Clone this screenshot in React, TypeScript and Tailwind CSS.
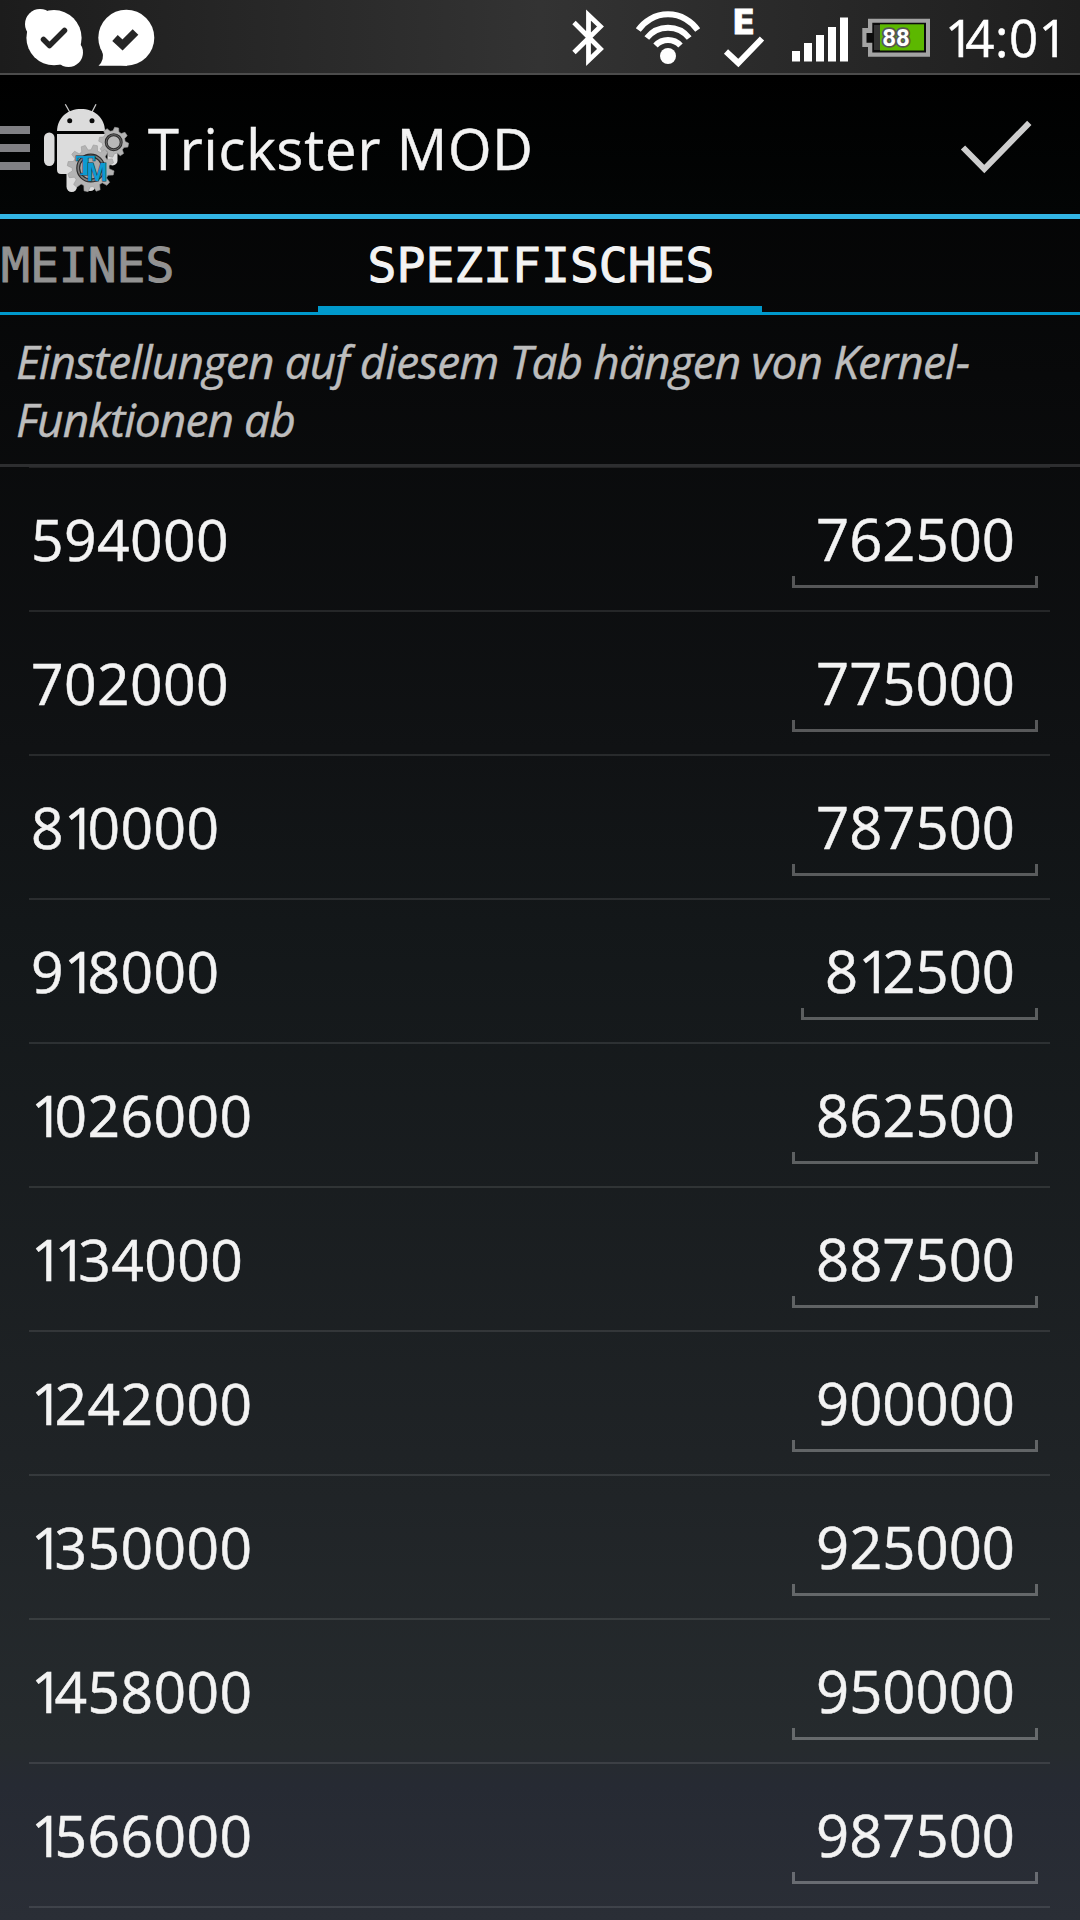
interface VoltageEntry {
    frequency: string;
    voltage: string;
}

const entries: VoltageEntry[] = [
    { frequency: '594000', voltage: '762500' },
    { frequency: '702000', voltage: '775000' },
    { frequency: '810000', voltage: '787500' },
    { frequency: '918000', voltage: '812500' },
    { frequency: '1026000', voltage: '862500' },
    { frequency: '1134000', voltage: '887500' },
    { frequency: '1242000', voltage: '900000' },
    { frequency: '1350000', voltage: '925000' },
    { frequency: '1458000', voltage: '950000' },
    { frequency: '1566000', voltage: '987500' },
];

// Outline of a cog wheel around (cx, cy)
function gearPath(cx: number, cy: number, outer: number, inner: number, teeth: number) {
    const points: string[] = [];
    const step = (Math.PI * 2) / teeth;
    const at = (radius: number, angle: number) =>
        `${(cx + radius * Math.cos(angle)).toFixed(2)} ${(cy + radius * Math.sin(angle)).toFixed(2)}`;

    for (let i = 0; i < teeth; i++) {
        const a = i * step + 0.2;
        points.push(at(inner, a - step * 0.34), at(outer, a - step * 0.17));
        points.push(at(outer, a + step * 0.17), at(inner, a + step * 0.34));
    }
    return `M${points.join('L')}Z`;
}

// The digit 1 is set tighter than the others
function Digits({ value }: { value: string }) {
    return (
        <>
            {value.split(/(1)/).map((part, i) =>
                part === '1' ? <span key={i} className="tracking-[-9px]">1</span> : part
            )}
        </>
    );
}

function StatusBar() {
    return (
        <div className="flex h-[77px] items-start border-b-2 border-black bg-linear-to-r/srgb from-[#1c1c1c] via-[#333333] to-[#1e1e1e]">
            <div className="flex h-[75px] w-full items-start border-b-2 border-[#4c4c4c] pl-6">
                <svg className="h-[71px] w-[60px]" viewBox="24 0 60 71" fill="#fff">
                    <circle cx="54" cy="37.7" r="27.6" />
                    <circle cx="40" cy="24" r="15" />
                    <circle cx="68.5" cy="52.5" r="14.5" />
                    <path d="M43.5 39.5L49.5 45.5L64.5 30.5" fill="none" stroke="#242424" strokeWidth="5.5" strokeLinecap="round" strokeLinejoin="round" />
                </svg>
                <svg className="ml-3 h-[71px] w-[60px]" viewBox="96 0 60 71" fill="#fff">
                    <circle cx="126.3" cy="37.7" r="28" />
                    <path d="M102 50Q105 60 98.5 65.7H127V50Z" />
                    <path d="M115 38L122.5 45L135.5 32" fill="none" stroke="#262626" strokeWidth="8" />
                </svg>
                <svg className="ml-[412px] h-[71px] w-[40px]" viewBox="568 0 40 71" fill="none" stroke="#fff" strokeWidth="4.8">
                    <path d="M574 22.5L600.5 49L588.5 60.5V15L600.5 26.5L574 52.5" />
                </svg>
                <svg className="ml-6 h-[71px] w-[72px]" viewBox="632 0 72 71" fill="none" stroke="#fff" strokeWidth="6">
                    <path d="M638.3 30A36 36 0 0 1 697.7 30" />
                    <path d="M646.8 38A27 27 0 0 1 689.2 38" />
                    <path d="M655.5 45.5A17 17 0 0 1 680.5 45.5" />
                    <circle cx="668" cy="56" r="8" fill="#fff" stroke="none" />
                </svg>
                <svg className="ml-4 h-[71px] w-[48px]" viewBox="720 0 48 71">
                    <text x="743.5" y="33.5" textAnchor="middle" fill="#fff" stroke="#fff" strokeWidth="0.8" className="font-['DejaVu_Sans',sans-serif] text-[34px] font-bold">E</text>
                    <path d="M726 51.5L738.3 63L762 38.5" fill="none" stroke="#fff" strokeWidth="6" />
                </svg>
                <svg className="ml-5 h-[71px] w-[64px]" viewBox="788 0 64 71" fill="#fff">
                    <rect x="792" y="51" width="8" height="10.5" />
                    <rect x="804" y="43" width="8" height="18.5" />
                    <rect x="816" y="35" width="8" height="26.5" />
                    <rect x="828" y="27" width="8" height="34.5" />
                    <rect x="840" y="17.5" width="8" height="44" />
                </svg>
                <svg className="ml-2 h-[71px] w-[72px]" viewBox="860 0 72 71">
                    <path d="M868 18.7H930V56.7H868V47H862.3V28H868Z" fill="#a3a3a3" />
                    <path d="M872.3 22.7H926V52.5H872.3V42.7H866.5V33H872.3Z" fill="#0c0c0c" />
                    <rect x="874" y="25" width="6" height="25" fill="#333" />
                    <rect x="880" y="24.3" width="44" height="26.2" fill="#5cb800" />
                    <text x="896" y="45.5" textAnchor="middle" fill="#fff" stroke="#555" strokeWidth="3.5" paintOrder="stroke" strokeLinejoin="round" className="font-[Roboto,sans-serif] text-[24px] font-bold">88</text>
                </svg>
                <div className="ml-[13px] h-[71px] text-[51px] leading-[74px] font-medium tracking-[0.6px] text-white">
                    <Digits value="14:01" />
                </div>
            </div>
        </div>
    );
}

function AppLogo() {
    return (
        <svg className="ml-3 h-[96px] w-[90px]" viewBox="42 99 90 96">
            <g fill="#dcdcdc">
                <path d="M65.3 103.3L69.7 111M96 103.3L92 111" stroke="#c8c8c8" strokeWidth="1.3" />
                <path d="M57 130C57.5 116 68 108 81 108S104.500 116 105 130Z" />
                <path d="M57 133H105V173H61Q57 173 57 168.5Z" />
                <rect x="44" y="131.5" width="10.5" height="33.5" rx="5.2" />
                <rect x="107.5" y="131.5" width="10" height="33" rx="5" />
                <rect x="66.5" y="165" width="10.5" height="26" rx="5.2" />
                <rect x="85" y="165" width="10.5" height="25" rx="5.2" />
            </g>
            <circle cx="69.7" cy="119.7" r="2.5" fill="#0a0a0a" />
            <circle cx="92" cy="119.7" r="2.5" fill="#0a0a0a" />
            <g fill="#b4b4b4" stroke="#9a9a9a" strokeWidth="0.6" strokeLinejoin="round">
                <path d={gearPath(113.7, 141.2, 15, 11.5, 8)} />
                <path d={gearPath(90.7, 167.3, 23.5, 18.5, 12)} />
            </g>
            <circle cx="113.7" cy="141.2" r="7.5" fill="#b8b8b8" stroke="#2d2d2d" strokeWidth="3" />
            <circle cx="113.7" cy="141.2" r="7.5" fill="none" stroke="#777" strokeWidth="0.8" />
            <circle cx="90.7" cy="167" r="12.5" fill="#a9a9a9" stroke="#2b2b2b" strokeWidth="4" />
            <circle cx="90.7" cy="167" r="12.5" fill="none" stroke="#808080" strokeWidth="1.6" />
            <text fill="#0d9ad2" stroke="#16323e" strokeWidth="1" paintOrder="stroke" className="font-bold">
                <tspan x="75.8" y="174" className="font-['DejaVu_Serif',serif] text-[26px]">T</tspan>
                <tspan x="86.5" y="179.5" className="font-['Liberation_Sans_Narrow','Liberation_Sans',sans-serif] text-[25px]">M</tspan>
            </text>
        </svg>
    );
}

function ActionBar() {
    return (
        <div className="flex h-[142px] items-center border-b-[5px] border-[#33b5e5] bg-linear-to-b/srgb from-black to-[#030505] pt-1">
            <div className="flex w-[30px] flex-col gap-[10px]">
                <div className="h-2 bg-[#808084]" />
                <div className="h-2 bg-[#808084]" />
                <div className="h-2 bg-[#808084]" />
            </div>
            <AppLogo />
            <h1 className="ml-4 flex-1 text-[56px] leading-[72px] tracking-[0.9px] whitespace-nowrap text-[#f3f3f3]">Trickster MOD</h1>
            <svg className="mr-[46px] h-[60px] w-[76px]" viewBox="958 118 76 60" fill="none" stroke="#cecece" strokeWidth="6">
                <path d="M963 147.5L984.3 169L1029.3 122.8" />
            </svg>
        </div>
    );
}

function Tabs() {
    return (
        <div className="flex h-[96px] border-b-[3px] border-[#0099cc] font-['DejaVu_Sans_Mono',monospace] text-[48px] leading-[93px] [-webkit-text-stroke-width:1px]">
            <div className="w-[318px] pl-px text-[#929292]">MEINES</div>
            <div className="h-[93px] w-[444px] border-b-[6px] border-[#0099cc] pl-[2px] text-center text-[#f3f3f3]">SPEZIFISCHES</div>
        </div>
    );
}

function VoltageRow({ frequency, voltage }: VoltageEntry) {
    return (
        <div className="mr-[30px] ml-[29px] flex h-[144px] items-start justify-between border-b-2 border-white/10 text-[#f3f3f3]">
            <div className="ml-[2px] text-[57px] leading-[142px] tracking-[0.4px]">
                <Digits value={frequency} />
            </div>
            <div className="mr-3 pt-[35px]">
                <div className="h-[73px] pr-[23px] pl-6 text-[58px] leading-[72px]">
                    <Digits value={voltage} />
                </div>
                <div className="h-3 border-x-[3px] border-b-[3px] border-white/30" />
            </div>
        </div>
    );
}

export default function App() {
    return (
        <div className="h-[1920px] w-[1080px] overflow-hidden bg-[linear-gradient(to_bottom,#000_0%,#101214_39%,#131719_48%,#202427_78%,#262b2e_91%,#262a33_93%,#2a2e36_100%)] font-['Open_Sans',sans-serif] [-webkit-text-stroke-width:0.5px]">
            <StatusBar />
            <ActionBar />
            <Tabs />
            <p className="h-[152px] border-b-[3px] border-[#2d2e30] pt-[17px] pl-4 text-[46px] leading-[58px] tracking-[-0.9px] text-[#bdbdbd] italic">
                Einstellungen auf diesem Tab hängen von Kernel-<br />Funktionen ab
            </p>
            <div className="mr-[30px] ml-[29px] h-px bg-white/10" />
            {entries.map((entry) => (
                <VoltageRow key={entry.frequency} {...entry} />
            ))}
        </div>
    );
}
